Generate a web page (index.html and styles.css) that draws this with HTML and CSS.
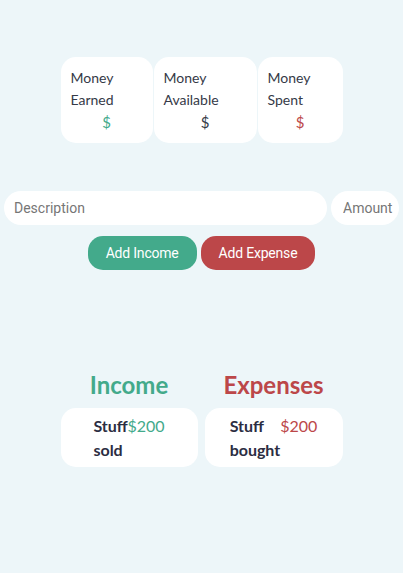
FILE: index.html
```html
<!DOCTYPE html>
<html lang="en">
<head>
    <meta charset="UTF-8">
    <meta name="viewport" content="width=device-width, initial-scale=1.0">
    <title>Budget</title>
    <link rel="stylesheet" href="styles.css">
</head>
<body>
    <div class="app">
        <div class="summary">
            <div class="card earned">
                <p>Money Earned</p>
                <p class="value">$</p>
            </div>
            <div class="card available">
                <p>Money Available</p>
                <p class="value">$</p>
            </div>
            <div class="card spent">
                <p>Money Spent</p>
                <p class="value">$</p>
            </div>
        </div>

        <form class="entry">
            <div class="fields">
                <input type="text" class="desc" placeholder="Description">
                <input type="text" class="amount" placeholder="Amount">
            </div>
            <div class="actions">
                <button type="button" class="btn income-btn">Add Income</button>
                <button type="button" class="btn expense-btn">Add Expense</button>
            </div>
        </form>

        <div class="lists">
            <div class="column">
                <h2 class="income-title">Income</h2>
                <div class="item income-item">
                    <span class="name">Stuff sold</span>
                    <span class="price">$200</span>
                </div>
            </div>
            <div class="column">
                <h2 class="expense-title">Expenses</h2>
                <div class="item expense-item">
                    <span class="name">Stuff bought</span>
                    <span class="price">$200</span>
                </div>
            </div>
        </div>
    </div>
</body>
</html>
```

FILE: styles.css
```css
body {
    margin: 0;
    padding: 0;
    background-color: #edf6f9;
    font-family: "Lato", "Noto Sans", sans-serif;
    color: #353a47;
}

.app {
    padding-top: 57px;
}

/* top cards */
.summary {
    display: grid;
    grid-template-columns: 92px 103px 85px;
    gap: 1px;
    justify-content: center;
}

.card {
    background-color: white;
    border-radius: 15px;
    padding: 10px 10px;
    font-size: 14px;
    line-height: 22px;
}

.card p {
    margin: 0;
}

.card .value {
    text-align: center;
    font-size: 15px;
}

.earned .value {
    color: #43aa8b;
}

.spent .value {
    color: #bc4749;
}

/* form */
.entry {
    margin-top: 48px;
}

.fields {
    display: flex;
    gap: 4px;
    padding: 0 4px;
}

.fields input {
    height: 34px;
    box-sizing: border-box;
    border: none;
    border-radius: 17px;
    background-color: white;
    font-family: "Roboto", sans-serif;
    font-size: 14px;
    color: #333;
    outline: none;
}

.fields input::placeholder {
    color: #767676;
}

.desc {
    flex: 1;
    padding: 0 10px;
}

.amount {
    width: 68px;
    padding: 0 0 0 12px;
}

.actions {
    display: flex;
    justify-content: center;
    gap: 4px;
    margin-top: 11px;
}

.btn {
    height: 34px;
    padding: 0 18px;
    border: none;
    border-radius: 15px;
    color: white;
    font-family: "Roboto", sans-serif;
    font-size: 14px;
    letter-spacing: -0.2px;
}

.income-btn {
    background-color: #43aa8b;
}

.expense-btn {
    background-color: #bc4749;
}

/* lists */
.lists {
    display: grid;
    grid-template-columns: 137px 138px;
    gap: 7px;
    justify-content: center;
    margin-top: 100px;
}

.column h2 {
    margin: 0 0 9px;
    text-align: center;
    font-size: 24px;
    line-height: 29px;
    font-weight: 700;
}

.income-title {
    color: #43aa8b;
}

.expense-title {
    color: #bc4749;
}

.item {
    display: flex;
    justify-content: center;
    background-color: white;
    border-radius: 15px;
    padding: 6px 10px 5px;
    font-size: 16px;
    line-height: 24px;
}

.item .name {
    font-weight: 700;
    color: #2b2d42;
    width: 1px;
    min-width: min-content;
}

.income-item .price {
    color: #43aa8b;
}

.expense-item .price {
    color: #bc4749;
}
```
